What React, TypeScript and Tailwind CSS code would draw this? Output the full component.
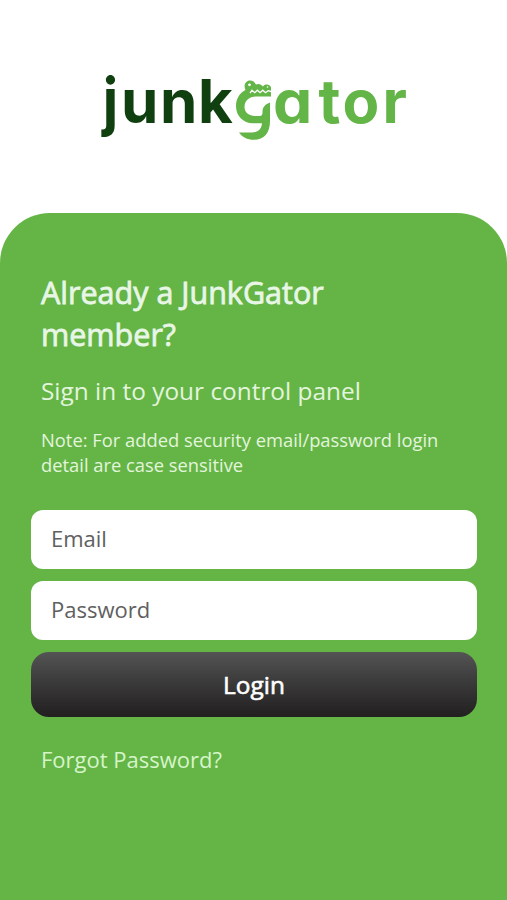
function Logo() {
  return (
    <svg
      role="img"
      aria-label="junkgator"
      viewBox="94 40 320 130"
      className="h-[130px] w-[320px] font-['Inter',sans-serif] text-[60px] font-bold [font-feature-settings:'cv11']"
    >
      <g fill="#10400f">
        <text transform="translate(102.8 124) scale(0.95 1.07)">j</text>
        <text x="121 160 198" y="123">unk</text>
      </g>
      <g fill="#62b546">
        <text transform="translate(273 123) scale(1.04 1)">a</text>
        <text x="318.5 342.5 382.5" y="123">tor</text>
      </g>
      <path
        fill="#62b546"
        d="M245.5 90 C243 85 246 80.5 250 80.5 C253 80.5 254.5 82 256 84.5 C259 83 261 84.5 263 86.5 C265 83.5 270 84 271 87.5 V96.5 H256 C249 96.5 244.5 101 244.5 107 C244.5 112.5 249 116 255 116 H259.5 C262 116 262.5 114.5 262.5 112 C262.5 107 265.5 104 270 102.5 V121 C270 133 264 139.8 254 139.8 C247 139.8 242 137 239 132.5 H252 C258 132.5 261.5 129 262 123.3 H253 C243 123 236 116 236 106 C236 99 239.5 93 245.5 90 Z"
      />
      <circle cx="249.5" cy="84.8" r="1.4" fill="#fff" />
      <circle cx="267.5" cy="87" r="0.8" fill="#fff" />
      <path d="M250 93.2 l2 -3 l2.7 2.5 l2.7 -2.5 l2.7 2.5 l2.7 -2.5 l2.7 2.5 l2.7 -2 l3 0.8" fill="none" stroke="#fff" strokeWidth="1.3" />
    </svg>
  );
}

export default function App() {
  return (
    <main className="flex h-[900px] w-full flex-col bg-white font-['Open_Sans',sans-serif]">
      <header className="flex h-[213px] shrink-0 justify-center pt-[40px]">
        <Logo />
      </header>
      <section className="flex grow flex-col rounded-t-[50px] bg-[#65b446] pr-[30px] pl-[31px] pt-[58px]">
        <div className="px-[10px] text-[#e3f5dd]">
          <h1 className="w-[330px] text-[30.5px] leading-[42px] text-[#e8f6e6] [-webkit-text-stroke:0.8px_currentColor]">
            Already a JunkGator member?
          </h1>
          <p className="mt-[19px] text-[24.4px] leading-[34px]">Sign in to your control panel</p>
          <p className="mt-[19px] text-[18.35px] leading-[25px]">
            Note: For added security email/password login detail are case sensitive
          </p>
        </div>
        <form className="mt-[33px] flex flex-col">
          <input
            placeholder="Email"
            className="h-[59px] rounded-[12px] bg-white px-[20px] pb-[3px] text-[22px] text-[#606060] placeholder:text-[#606060]"
          />
          <input
            placeholder="Password"
            className="mt-[12px] h-[59px] rounded-[12px] bg-white px-[20px] pb-[3px] text-[22px] text-[#606060] placeholder:text-[#606060]"
          />
          <button
            type="button"
            className="mt-[12px] h-[65px] rounded-[18px] bg-linear-to-b from-[#545454] to-[#211f20] pt-[2px] text-[24.4px] text-white [-webkit-text-stroke:0.6px_currentColor]"
          >
            Login
          </button>
        </form>
        <a className="mt-[26px] px-[10px] text-[22px] leading-[32px] text-[#d5f5c9]">Forgot Password?</a>
      </section>
    </main>
  );
}
